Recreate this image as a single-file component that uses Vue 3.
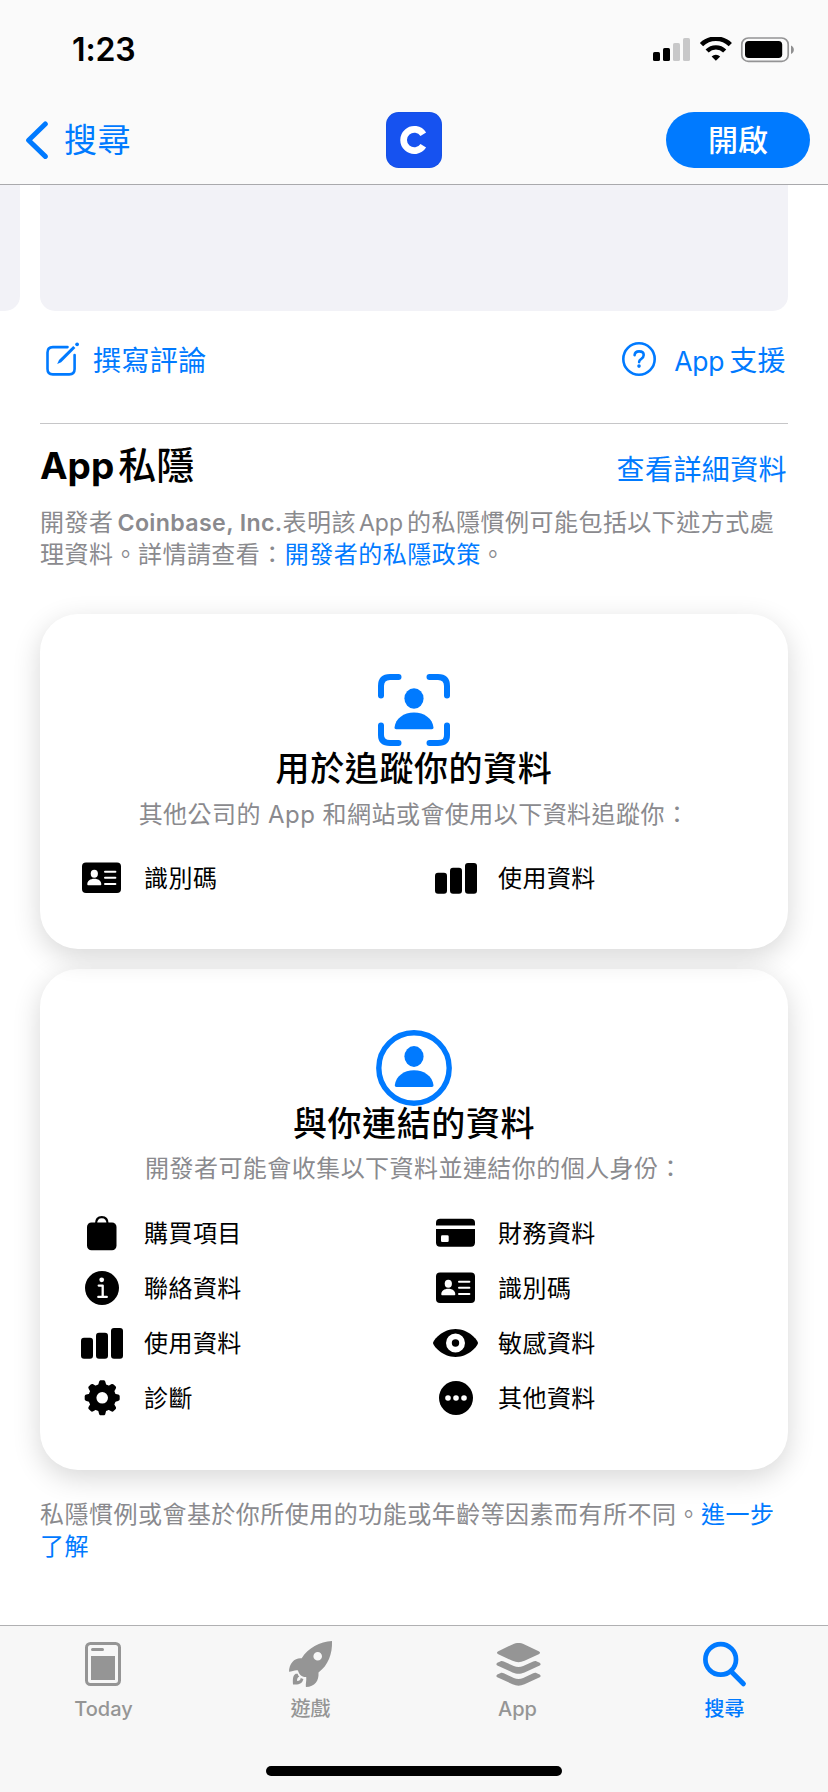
<script setup>
const tracking = [
  { icon: 'idcard', label: '識別碼' },
  { icon: 'bars', label: '使用資料' },
]
const linked = [
  { icon: 'bag', label: '購買項目' },
  { icon: 'credit', label: '財務資料' },
  { icon: 'info', label: '聯絡資料' },
  { icon: 'idcard', label: '識別碼' },
  { icon: 'bars', label: '使用資料' },
  { icon: 'eye', label: '敏感資料' },
  { icon: 'gear', label: '診斷' },
  { icon: 'more', label: '其他資料' },
]
const tabs = [
  { icon: 'today', label: 'Today' },
  { icon: 'rocket', label: '遊戲' },
  { icon: 'stack', label: 'App' },
  { icon: 'search', label: '搜尋', active: true },
]
const teeth = [0, 45, 90, 135, 180, 225, 270, 315]
</script>

<template>
  <div class="screen">
    <svg class="defs" width="0" height="0" aria-hidden="true">
      <symbol id="idcard" viewBox="0 0 49 40">
        <rect x="5" y="4.5" width="39" height="30.5" rx="4" />
        <g fill="#fff">
          <ellipse cx="17.3" cy="15.8" rx="3.6" ry="4" />
          <path d="M10.3 26.2c0-3.2 3-5.4 7-5.4s7 2.2 7 5.4c0 .8-.4 1.1-1.1 1.1H11.4c-.7 0-1.1-.3-1.1-1.1z" />
          <rect x="27" y="12.7" width="12.4" height="2" rx="1" />
          <rect x="27" y="18.8" width="12.4" height="2" rx="1" />
          <rect x="27" y="24.9" width="12.4" height="2" rx="1" />
        </g>
      </symbol>
      <symbol id="bars" viewBox="0 0 49 40">
        <rect x="4" y="14.7" width="12" height="21" rx="3" />
        <rect x="19" y="9.7" width="12" height="26" rx="3" />
        <rect x="34" y="5" width="12" height="30.7" rx="3" />
      </symbol>
      <symbol id="bag" viewBox="0 0 49 40">
        <rect x="10" y="9.5" width="29.5" height="27.7" rx="4.5" />
        <path d="M19 11c0-4.400 2.200-6.800 5.800-6.800s5.800 2.400 5.800 6.800" fill="none" stroke="#000" stroke-width="2.200" />
      </symbol>
      <symbol id="credit" viewBox="0 0 49 40">
        <path d="M5 12.600V9.900c0-2.800 1.400-4.200 4.200-4.200h30.600c2.800 0 4.200 1.400 4.200 4.200v2.700z" />
        <path d="M5 16h39v13.500c0 2.800-1.400 4.200-4.200 4.200H9.200c-2.800 0-4.200-1.400-4.200-4.200z" />
        <rect x="10" y="22.300" width="7.700" height="6.700" rx="1.300" fill="#fff" />
      </symbol>
      <symbol id="info" viewBox="0 0 49 40">
        <circle cx="25" cy="20" r="17" />
        <circle cx="24.700" cy="11.800" r="2.400" fill="#fff" />
        <path d="M21.700 17.600h4v11.200M21.300 28.900h8.500" fill="none" stroke="#fff" stroke-width="2.300" stroke-linecap="round" stroke-linejoin="round" />
      </symbol>
      <symbol id="gear" viewBox="0 0 49 40">
        <circle cx="25.200" cy="19.800" r="9.800" fill="none" stroke="#000" stroke-width="8" />
        <path
          v-for="a in teeth"
          :key="a"
          :transform="`rotate(${a} 25.200 19.800)`"
          d="M20.800 8.500 22 3.900c.3-1.100.9-1.600 1.900-1.600h2.600c1 0 1.600.5 1.900 1.600l1.200 4.600z"
        />
      </symbol>
      <symbol id="eye" viewBox="0 0 49 40">
        <path d="M2 20C2 17.400 11.300 6 24.500 6S47 17.400 47 20 37.700 34 24.500 34 2 22.600 2 20z" />
        <circle cx="24.500" cy="20" r="6.600" stroke="#fff" stroke-width="5.800" />
      </symbol>
      <symbol id="more" viewBox="0 0 49 40">
        <circle cx="25" cy="20" r="17" />
        <g fill="#fff">
          <circle cx="17" cy="20" r="2.800" />
          <circle cx="25" cy="20" r="2.800" />
          <circle cx="33" cy="20" r="2.800" />
        </g>
      </symbol>
      <symbol id="today" viewBox="0 0 47 48">
        <rect x="6.500" y="3.500" width="33" height="41" rx="4" fill="none" stroke="currentColor" stroke-width="3" />
        <rect x="11" y="8" width="13" height="3" rx="1.500" />
        <rect x="11" y="16" width="24" height="24" />
      </symbol>
      <symbol id="rocket" viewBox="0 0 47 48">
        <path
          fill-rule="evenodd"
          d="M45 1C33 1.500 21 8 14.700 18.300 8 17.500 2 23 2 31.800c3-.2 6.500-2.100 9-1.300C11.800 34.500 15.500 37.500 19.200 37c.5 3.500-.8 7-.3 10 9-.5 13.200-6 12.600-14.600C41 25.500 45.500 14 45 1zM35 16.300a4.300 4.300 0 1 0-8.600 0 4.300 4.300 0 0 0 8.600 0z"
        />
        <path d="M8.700 33.700C6 35.500 5.600 38.500 6 44.400c6 .6 9.400-.8 10.400-5.400-1.300-.3-1.800-.5-2.600-1.300-.3 2.200-1.600 3.400-3.700 3.300-.2-2.200.5-3.600 2.200-4.600-.8-.6-1.200-1.100-1.600-2.700z" />
      </symbol>
      <symbol id="stack" viewBox="0 0 47 48">
        <path d="M4.300 11.200 18.500 4.400c4.300-1.900 7.700-1.900 12 0l14.200 6.800c1.800.9 1.800 2.200 0 3.100L30.500 20.800c-4.300 1.900-7.700 1.900-12 0L4.300 14.300c-1.800-.9-1.800-2.200 0-3.100z" />
        <path id="chev" d="M3.300 22.800 6.200 21.400c1.300-.6 2.300-.5 3.600.1l10 4.600c3.200 1.300 6.200 1.300 9.400 0l10-4.600c1.300-.6 2.300-.7 3.600-.1l2.900 1.400c1.200.7 1.200 2.100 0 2.700L30.500 32.400c-4.300 1.900-7.700 1.900-12 0L3.300 25.500c-1.200-.6-1.200-2 0-2.700z" />
        <use href="#chev" y="11.800" />
      </symbol>
      <symbol id="search" viewBox="0 0 47 48">
        <circle cx="19.700" cy="19.400" r="15.300" fill="none" stroke="currentColor" stroke-width="4.700" />
        <path d="M30.700 32 42.400 43.800" fill="none" stroke="currentColor" stroke-width="5" stroke-linecap="round" />
      </symbol>
    </svg>

    <header class="top">
      <div class="status">
        <span class="time">1:23</span>
        <svg width="142" height="26" viewBox="0 0 142 26">
          <rect x="0" y="15" width="7" height="9" rx="1.600" />
          <rect x="10" y="11" width="7" height="13" rx="1.600" />
          <rect x="20" y="6" width="7" height="18" rx="1.600" fill="#c8c8c9" />
          <rect x="30" y="1" width="7" height="23" rx="1.600" fill="#c8c8c9" />
          <g fill="none" stroke="#000">
            <path d="M48.500 7.600a20.500 20.500 0 0 1 28.800 0" stroke-width="4.600" />
            <path d="M54.100 14a12.500 12.500 0 0 1 17.600 0" stroke-width="4.400" />
          </g>
          <path d="M58.600 19.400a6.500 6.500 0 0 1 8.600 0l-4.300 4.400z" />
          <rect x="88.800" y="1" width="46.400" height="23.400" rx="6.500" fill="none" stroke="#949495" stroke-width="1.700" />
          <rect x="92" y="4" width="37.200" height="17" rx="3.800" />
          <path d="M138 8.500c3.800 1.500 3.800 7 0 8.500z" fill="#8f8f90" />
        </svg>
      </div>
      <div class="nav">
        <div class="back">
          <svg width="24" height="40" viewBox="0 0 24 40"><path d="M21.300 4 4.600 20.200 21.300 36.400" fill="none" stroke="#007aff" stroke-width="5" stroke-linecap="round" stroke-linejoin="round" /></svg>
          <span>搜尋</span>
        </div>
        <svg class="logo" width="56" height="56" viewBox="0 0 56 56">
          <rect width="56" height="56" rx="12.500" fill="#1450e6" />
          <rect x="1" y="1" width="54" height="54" rx="11.500" fill="#1652f0" />
          <path d="M37.300 22.200a10.700 10.700 0 1 0 0 11.600" fill="none" stroke="#fff" stroke-width="6.700" />
        </svg>
        <div class="open">開啟</div>
      </div>
    </header>

    <main class="content">
      <div class="reviews">
        <div class="review previous"></div>
        <div class="review"></div>
      </div>
      <div class="actions">
        <div class="action">
          <svg width="36" height="36" viewBox="0 0 36 36">
            <path d="M22.500 5.100H7.800c-3.300 0-5.300 2-5.300 5.300v16.700c0 3.300 2 5.300 5.300 5.300h16.500c3.300 0 5.300-2 5.300-5.300V13" fill="none" stroke="currentColor" stroke-width="2.600" stroke-linecap="round" />
            <path d="M12.200 22 14 18.100 28.200 3.900l2.200 2.200L16.200 20.300z" />
            <circle cx="32.100" cy="2.300" r="1.900" />
          </svg>
          <span class="write">撰寫評論</span>
        </div>
        <div class="action support">
          <svg width="34" height="34" viewBox="0 0 34 34">
            <circle cx="17" cy="17" r="15.700" fill="none" stroke="currentColor" stroke-width="2.600" />
            <path d="M12.600 13.200c.2-2.400 1.900-3.800 4.500-3.800 2.700 0 4.600 1.500 4.600 3.700 0 1.700-.8 2.700-2.400 3.700-1.700 1-2.200 1.700-2.200 3.300" fill="none" stroke="currentColor" stroke-width="2.600" stroke-linecap="round" />
            <circle cx="17" cy="24.100" r="1.800" />
          </svg>
          <span><span class="lat">App</span>支援</span>
        </div>
      </div>

      <section class="privacy">
        <div class="heading">
          <h1><span>App</span>私隱</h1>
          <a>查看詳細資料</a>
        </div>
        <p class="intro">開發者<b>Coinbase, Inc.</b>表明該<span class="inlat">App</span>的私隱慣例可能包括以下述方式處<br />理資料。詳情請查看：<a>開發者的私隱政策</a>。</p>
      </section>

      <section class="card first">
        <svg class="hero" width="76" height="76" viewBox="0 0 76 76">
          <path d="M5 23.500V14C5 7.500 8.500 5 14 5h8.500M53.500 5H62c6 0 9 3 9 9v9.500M71 53.500V63c0 6-3 8-9 8h-8.500M22.500 71H14c-6 0-9-2.500-9-8v-9.500" fill="none" stroke="currentColor" stroke-width="6" stroke-linecap="round" />
          <ellipse cx="38" cy="26.500" rx="9.600" ry="10.300" />
          <path d="M18.500 55.500c1-9 9.200-15 19.500-15s18.500 6 19.500 15c0 1.200-.5 1.700-1.700 1.700H20.200c-1.200 0-1.700-.5-1.700-1.700z" />
        </svg>
        <h2>用於追蹤你的資料</h2>
        <p class="sub">其他公司的 App 和網站或會使用以下資料追蹤你：</p>
        <div class="grid">
          <div v-for="item in tracking" :key="item.label" class="item">
            <svg width="49" height="40"><use :href="'#' + item.icon" /></svg>
            <span>{{ item.label }}</span>
          </div>
        </div>
      </section>

      <section class="card second">
        <svg class="hero" width="76" height="76" viewBox="0 0 76 76">
          <circle cx="38" cy="38" r="35.200" fill="none" stroke="currentColor" stroke-width="5.400" />
          <ellipse cx="38" cy="26.500" rx="9.600" ry="10.400" />
          <path d="M18.800 55.200c1-9 9-15 19.200-15s18.500 6 19.500 15c0 1.200-.5 1.700-1.700 1.700H20.500c-1.200 0-1.700-.5-1.700-1.700z" />
        </svg>
        <h2>與你連結的資料</h2>
        <p class="sub">開發者可能會收集以下資料並連結你的個人身份：</p>
        <div class="grid">
          <div v-for="item in linked" :key="item.label" class="item">
            <svg width="49" height="40"><use :href="'#' + item.icon" /></svg>
            <span>{{ item.label }}</span>
          </div>
        </div>
      </section>

      <p class="note">私隱慣例或會基於你所使用的功能或年齡等因素而有所不同。<a>進一步<br />了解</a></p>
    </main>

    <footer class="bottom">
      <nav class="tabs">
        <div v-for="tab in tabs" :key="tab.icon" class="tab" :class="{ active: tab.active }">
          <svg width="47" height="48"><use :href="'#' + tab.icon" /></svg>
          <span>{{ tab.label }}</span>
        </div>
      </nav>
      <div class="home"></div>
    </footer>
  </div>
</template>

<style>
body {
  background: #fff;
}
</style>

<style scoped>
.screen {
  width: 828px;
  height: 1792px;
  overflow: hidden;
  display: flex;
  flex-direction: column;
  background: #fff;
  color: #000;
  font-family: Inter, "Noto Sans CJK TC", sans-serif;
}
.defs {
  position: absolute;
}
svg {
  display: block;
  flex: none;
  fill: currentColor;
}
h1, h2, p {
  margin: 0;
}
a {
  color: #007aff;
}
.top {
  height: 184px;
  flex: none;
  background: #fafafa;
  border-bottom: 1px solid #a9a9ac;
}
.status {
  height: 99px;
  padding: 0 33px 0 72px;
  display: flex;
  align-items: center;
  justify-content: space-between;
}
.time {
  font-size: 32px;
  font-weight: 600;
  letter-spacing: -0.1px;
}
.nav {
  height: 56px;
  margin-top: 13px;
  padding: 0 18px 0 24px;
  display: grid;
  grid-template-columns: 362px 56px 1fr;
  align-items: center;
}
.back {
  display: flex;
  align-items: center;
  gap: 16px;
  color: #007aff;
  font-size: 33px;
  letter-spacing: 0.5px;
  line-height: 56px;
}
.open {
  justify-self: end;
  width: 144px;
  height: 56px;
  border-radius: 28px;
  background: #007aff;
  color: #fff;
  font-size: 30px;
  font-weight: 500;
  line-height: 56px;
  text-align: center;
}
.content {
  height: 1440px;
  flex: none;
}
.reviews {
  display: flex;
  gap: 20px;
  height: 126px;
}
.review {
  width: 748px;
  background: #f2f2f7;
  border-radius: 0 0 15px 15px;
}
.review.previous {
  width: 20px;
  border-radius: 0 0 15px 0;
}
.actions {
  height: 113px;
  margin: 0 40px;
  padding: 0 2px 0 5px;
  box-sizing: border-box;
  border-bottom: 1px solid #c6c6c8;
  display: flex;
  justify-content: space-between;
}
.action {
  height: 36px;
  margin-top: 31px;
  display: flex;
  align-items: center;
  color: #007aff;
  font-size: 28px;
  letter-spacing: 0.4px;
}
.action svg {
  margin-right: 12px;
}
.write {
  padding-bottom: 2px;
}
.support {
  height: 34px;
}
.support svg {
  margin-right: 18px;
}
.lat {
  margin-right: 5px;
  font-size: 26.5px;
  letter-spacing: -0.3px;
}
.privacy {
  height: 190px;
  padding: 0 40px;
}
.heading {
  display: flex;
  justify-content: space-between;
  height: 83px;
  padding-right: 1px;
}
h1 {
  font-size: 38px;
  font-weight: 500;
  line-height: 83px;
}
h1 span {
  font-size: 37px;
  font-weight: 700;
  margin-right: 4px;
}
.heading a {
  font-size: 28px;
  letter-spacing: 0.4px;
  line-height: 93px;
}
.intro, .note {
  color: #8a8a8e;
  font-size: 24px;
  letter-spacing: 0.48px;
  line-height: 32px;
  white-space: nowrap;
}
.intro b {
  margin-left: 4px;
  font-size: 23.2px;
  font-weight: 600;
  letter-spacing: 0.35px;
}
.inlat {
  margin: 0 4px 0 3px;
  font-size: 23px;
  letter-spacing: 0;
}
.card {
  margin: 0 40px;
  background: #fff;
  border-radius: 38px;
  box-shadow: 0 8px 28px rgba(0, 0, 0, 0.16);
  box-sizing: border-box;
  display: flex;
  flex-direction: column;
  align-items: center;
}
.first {
  position: relative;
  z-index: 1;
  height: 335px;
  padding-top: 58px;
}
.second {
  height: 501px;
  margin-top: 20px;
  padding-top: 61px;
}
.hero {
  color: #007aff;
}
h2 {
  font-size: 34px;
  font-weight: 500;
  letter-spacing: 0.6px;
  line-height: 42px;
}
.second h2 {
  line-height: 36px;
}
.sub {
  color: #8a8a8e;
  font-size: 24px;
  letter-spacing: 0.45px;
  line-height: 50px;
}
.second .sub {
  line-height: 54px;
}
.grid {
  width: 100%;
  box-sizing: border-box;
  padding-left: 37px;
  display: grid;
  grid-template-columns: 354px 1fr;
  grid-auto-rows: 55px;
  margin-top: 10px;
}
.second .grid {
  margin-top: 9px;
}
.item {
  display: flex;
  align-items: center;
  gap: 18px;
  font-size: 24px;
  letter-spacing: 0.45px;
}
.item span {
  padding-bottom: 3px;
}
.note {
  padding: 29px 40px 0;
}
.bottom {
  height: 167px;
  box-sizing: border-box;
  flex: none;
  background: #f7f7f7;
  border-top: 1px solid #b0b0b2;
  display: flex;
  flex-direction: column;
  align-items: center;
}
.tabs {
  width: 100%;
  display: grid;
  grid-template-columns: repeat(4, 1fr);
  padding-top: 14px;
}
.tab {
  display: flex;
  flex-direction: column;
  align-items: center;
  color: #959595;
  font-size: 20px;
  font-weight: 500;
  line-height: 42px;
}
.tab.active {
  color: #007aff;
}
.home {
  width: 296px;
  height: 10px;
  border-radius: 5px;
  background: #000;
  margin-top: 36px;
}
</style>
